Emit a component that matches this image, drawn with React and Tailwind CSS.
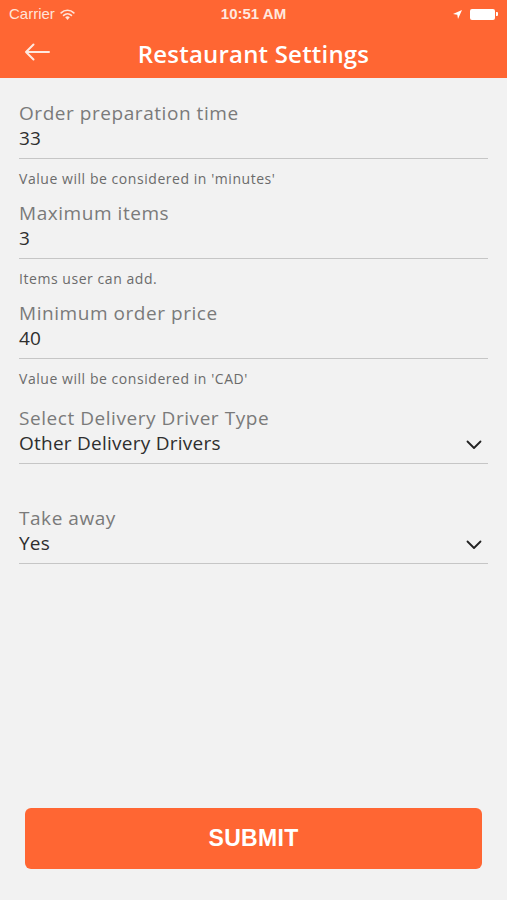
import React from "react";

const font = { fontFamily: "'Open Sans', 'Noto Sans', sans-serif" };

function Chevron() {
  return (
    <svg width="16" height="10" viewBox="0 0 16 10" fill="none">
      <path d="M1.5 1.5 L8 8 L14.5 1.5" stroke="#222" strokeWidth="1.8" strokeLinecap="round" strokeLinejoin="round" />
    </svg>
  );
}

function Field({ label, value, helper, select }) {
  return (
    <div className="flex flex-col">
      <div className="h-[26px] leading-[26px] text-[19px] text-[#7a7a7a] tracking-[0.55px]">{label}</div>
      <div className="h-[32px] flex items-start justify-between">
        <span className="h-[24px] leading-[24px] text-[19px] text-[#2e2e2e] tracking-[0.25px]">{value}</span>
        {select && (
          <span className="mt-[9px] mr-[6px]">
            <Chevron />
          </span>
        )}
      </div>
      <div className="h-[1px] bg-[#c6c6c6]" />
      {helper ? (
        <div className="mt-[10px] mb-[11px] h-[20px] leading-[20px] text-[14px] text-[#6b6b6b] tracking-[0.55px]">{helper}</div>
      ) : (
        <div className="h-[41px]" />
      )}
    </div>
  );
}

export default function App() {
  return (
    <div className="w-[507px] h-[900px] bg-[#f2f2f2] flex flex-col" style={font}>
      <div className="bg-[#ff6633] h-[78px] flex flex-col">
        <div className="h-[28px] flex items-center justify-between px-[9px] text-white text-[15px]" style={{ fontFamily: "'Liberation Sans', Arial, sans-serif" }}>
          <div className="flex items-center gap-[5px] w-[120px]">
            <span className="text-[#ffe3d8]">Carrier</span>
            <svg width="15" height="11" viewBox="0 0 15 11">
              <path d="M7.5 11 L5.2 8.3 A3.4 3.4 0 0 1 9.8 8.3 Z" fill="#ffe3d8" />
              <path d="M3.6 6.4 A5.8 5.8 0 0 1 11.4 6.4" stroke="#ffe3d8" strokeWidth="1.7" fill="none" strokeLinecap="round" />
              <path d="M1.2 3.8 A9 9 0 0 1 13.8 3.8" stroke="#ffe3d8" strokeWidth="1.7" fill="none" strokeLinecap="round" />
            </svg>
          </div>
          <div className="font-bold text-[15px] text-[#ffe8df]">10:51 AM</div>
          <div className="flex items-center justify-end gap-[8px] w-[120px]">
            <svg width="9" height="9" viewBox="0 0 9 9">
              <path d="M9 0 L0 4 L4.3 4.7 L5 9 Z" fill="#fff" />
            </svg>
            <div className="flex items-center">
              <div className="w-[25px] h-[11px] bg-white rounded-[2px]" />
              <div className="w-[2px] h-[4px] bg-white rounded-r-[1px] ml-[1px]" />
            </div>
          </div>
        </div>
        <div className="h-[50px] flex items-center relative">
          <svg className="absolute left-[24px] top-[15px]" width="26" height="18" viewBox="0 0 26 18" fill="none">
            <path d="M25 9 H2 M9.5 1.5 L2 9 L9.5 16.5" stroke="#ffe9e0" strokeWidth="2" strokeLinecap="round" strokeLinejoin="round" />
          </svg>
          <div className="flex-1 text-center text-white font-semibold text-[24px] tracking-[0.2px] pt-[1px]">
            Restaurant Settings
          </div>
        </div>
      </div>

      <div className="px-[19px] pt-[22px] flex flex-col">
        <Field label="Order preparation time" value="33" helper="Value will be considered in 'minutes'" />
        <Field label="Maximum items" value="3" helper="Items user can add." />
        <Field label="Minimum order price" value="40" helper="Value will be considered in 'CAD'" />
        <div className="h-[5px]" />
        <Field label="Select Delivery Driver Type" value="Other Delivery Drivers" select />
        <Field label="Take away" value="Yes" select />
      </div>

      <div className="flex-1" />
      <div className="px-[25px] pb-[31px]">
        <button className="w-full h-[61px] bg-[#ff6633] rounded-[6px] text-white font-bold text-[23px] tracking-[0.3px]" style={{ fontFamily: "'Liberation Sans', Arial, sans-serif" }}>
          SUBMIT
        </button>
      </div>
    </div>
  );
}
